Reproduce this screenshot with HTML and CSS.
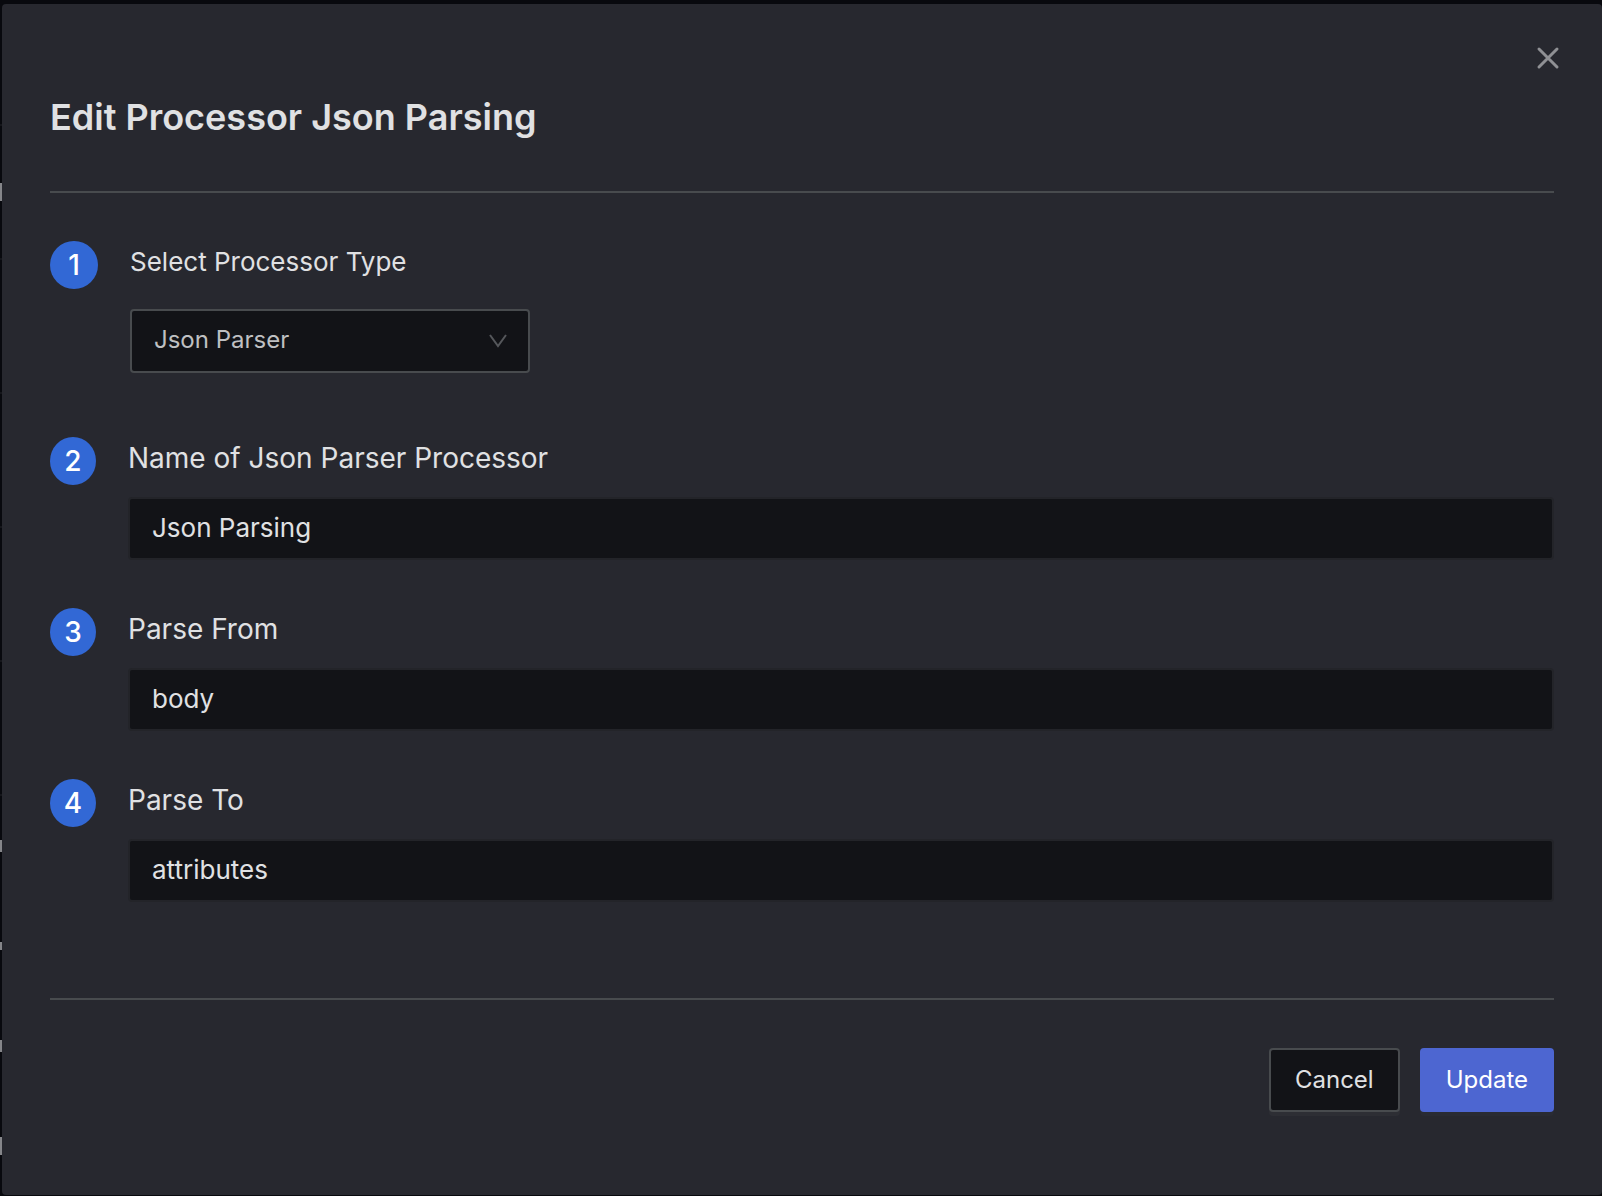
FILE: index.html
```
<!DOCTYPE html>
<html lang="en">
<head>
<meta charset="utf-8">
<title>Edit Processor</title>
<link rel="stylesheet" href="styles.css">
</head>
<body>
<div class="backdrop" aria-hidden="true">
  <div class="row short"></div>
  <div class="row"><i class="glyph tall"></i></div>
  <div class="row"></div>
  <div class="row"></div>
  <div class="row"></div>
  <div class="row"></div>
  <div class="entry"><i class="glyph"></i></div>
  <div class="entry"><i class="glyph low"></i></div>
  <div class="entry"><i class="glyph"></i></div>
  <div class="entry"><i class="glyph tall"></i></div>
</div>
<main class="modal" role="dialog" aria-labelledby="title">
  <button class="close" type="button" aria-label="Close">
    <svg width="24" height="24" viewBox="0 0 24 24"><path d="M3 3 21 21M21 3 3 21"/></svg>
  </button>
  <h1 class="title" id="title">Edit Processor Json Parsing</h1>
  <form class="form">
    <div class="steps">
      <div class="step first">
        <span class="badge">1</span>
        <div class="field">
          <label class="label" for="type">Select Processor Type</label>
          <div class="select-wrap">
            <select class="select" id="type"><option>Json Parser</option></select>
            <svg class="chevron" width="18" height="14" viewBox="0 0 18 14"><path d="M1 1 9 12 17 1"/></svg>
          </div>
        </div>
      </div>
      <div class="step">
        <span class="badge">2</span>
        <div class="field">
          <label class="label" for="name">Name of Json Parser Processor</label>
          <input class="input" id="name" type="text" value="Json Parsing">
        </div>
      </div>
      <div class="step">
        <span class="badge">3</span>
        <div class="field">
          <label class="label" for="from">Parse From</label>
          <input class="input" id="from" type="text" value="body">
        </div>
      </div>
      <div class="step">
        <span class="badge">4</span>
        <div class="field">
          <label class="label" for="to">Parse To</label>
          <input class="input" id="to" type="text" value="attributes">
        </div>
      </div>
    </div>
    <div class="actions">
      <button class="btn" type="button">Cancel</button>
      <button class="btn primary" type="submit">Update</button>
    </div>
  </form>
</main>
</body>
</html>
```

FILE: styles.css
```
* { box-sizing: border-box; }

body {
  margin: 0;
  min-height: 100vh;
  padding: 4px 0 1px 2px;
  display: flex;
  background: #08090e;
  font-family: Inter, "Liberation Sans", sans-serif;
  color: #e0e1e3;
}

/* Table behind the dialog */
.backdrop {
  position: absolute;
  inset: 0;
  overflow: hidden;
}
.row, .entry {
  display: flex;
  align-items: center;
  height: 134px;
}
.row { border-bottom: 2px solid #15161b; }
.row.short { height: 126px; }
.entry { height: 100px; }
.glyph {
  width: 2px;
  height: 12px;
  background: #85868a;
}
.glyph.tall { height: 18px; }
.glyph.low { height: 8px; }

.modal {
  position: relative;
  flex: 1;
  padding: 88px 48px 80px;
  border-radius: 4px;
  background: #27282f;
}

.close {
  position: absolute;
  top: 42px;
  right: 42px;
  width: 24px;
  height: 24px;
  padding: 0;
  border: 0;
  background: none;
}
.close svg {
  display: block;
  fill: none;
  stroke: #8f9094;
  stroke-width: 3;
  stroke-linecap: round;
}

.title {
  margin: 0;
  padding-bottom: 49px;
  border-bottom: 2px solid #484b4e;
  font-size: 36px;
  line-height: 50px;
  font-weight: 600;
}

.steps {
  display: flex;
  flex-direction: column;
  gap: 48px;
  padding: 48px 0 96px;
}
.step {
  display: flex;
  align-items: flex-start;
  gap: 32px;
}
.step.first { margin-bottom: 16px; }
.badge {
  flex: none;
  width: 46px;
  height: 48px;
  border-radius: 50%;
  background: #3268d5;
  color: #fff;
  font-size: 28px;
  line-height: 48px;
  font-weight: 500;
  text-align: center;
}
.first .badge { width: 48px; }
.field { flex: 1; }
.label {
  display: block;
  margin-bottom: 18px;
  font-size: 28px;
  line-height: 42px;
}
.first .label {
  margin-bottom: 26px;
  font-size: 26px;
}

.select-wrap {
  position: relative;
  max-width: 400px;
}
.select {
  display: block;
  width: 100%;
  height: 64px;
  padding: 0 22px 2px;
  border: 2px solid #484b4e;
  border-radius: 4px;
  appearance: none;
  background: #121317;
  color: #bfc0c2;
  font: 24px/36px Inter, "Liberation Sans", sans-serif;
}
.chevron {
  position: absolute;
  top: 25px;
  right: 23px;
  fill: none;
  stroke: #55575b;
  stroke-width: 2;
  pointer-events: none;
}

.input {
  display: block;
  width: 100%;
  height: 63px;
  padding: 0 22px 2px;
  border: 2px solid #232429;
  border-radius: 4px;
  background: #121317;
  color: #e0e1e3;
  font: 26px/36px Inter, "Liberation Sans", sans-serif;
}

.actions {
  display: flex;
  justify-content: flex-end;
  gap: 20px;
  padding-top: 48px;
  border-top: 2px solid #484b4e;
}
.btn {
  height: 64px;
  padding: 0 24px;
  border: 2px solid #484b4e;
  border-radius: 4px;
  background: #121317;
  color: #e0e1e3;
  font: 24px/36px Inter, "Liberation Sans", sans-serif;
  box-shadow: 0 4px 0 #2d2e34;
}
.btn.primary {
  border-color: #4d66d1;
  background: #4d66d1;
  color: #fff;
  box-shadow: 0 4px 0 #292b33;
}
```
